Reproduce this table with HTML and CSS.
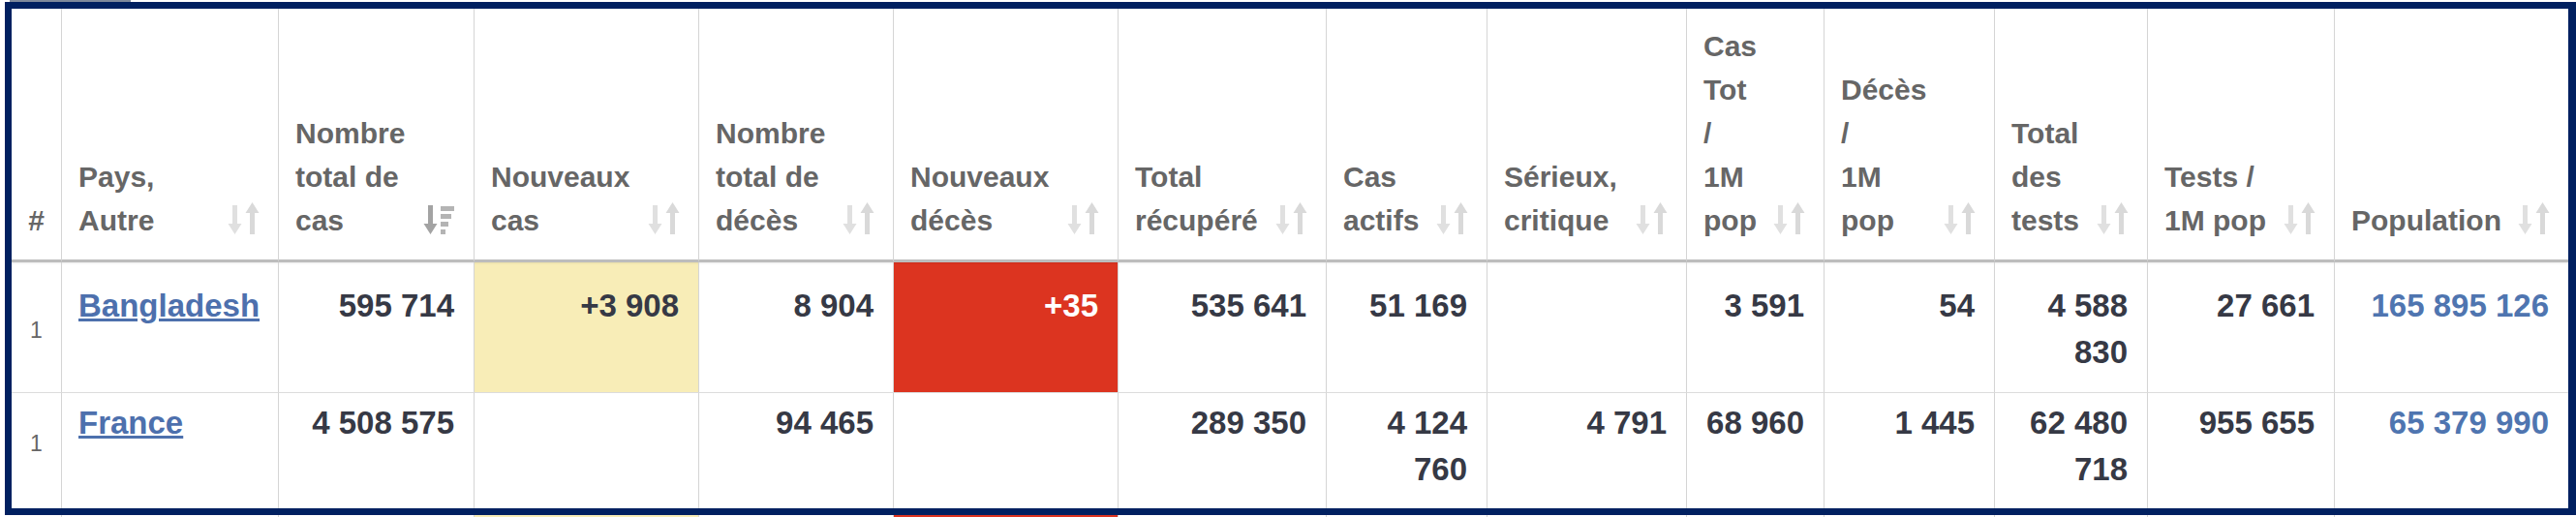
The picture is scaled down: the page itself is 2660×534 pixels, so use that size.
FILE: index.html
```html
<!DOCTYPE html>
<html lang="fr">
<head>
<meta charset="utf-8">
<title>Statistiques COVID-19</title>
<link rel="stylesheet" href="styles.css">
</head>
<body>
<svg class="svg-defs" aria-hidden="true">
  <symbol id="sort-both" viewBox="0 0 33 33">
    <path d="M5 3h5v19h4.5L7.5 33 0.5 22H5z" fill="#e0e0e0"/>
    <path d="M23 33h5V11h4.5L25.5 0 18.5 11H23z" fill="#d9d9d9"/>
  </symbol>
  <symbol id="sort-desc" viewBox="0 0 33 33">
    <path d="M5 3h5v19h4.5L7.5 33 0.5 22H5z" fill="#a3a3a3"/>
    <rect x="18" y="4" width="14" height="5" fill="#b4b4b4"/>
    <rect x="18" y="12" width="11" height="5" fill="#b4b4b4"/>
    <rect x="18" y="20" width="8" height="5" fill="#b4b4b4"/>
    <rect x="18" y="28" width="5" height="5" fill="#b4b4b4"/>
  </symbol>
</svg>
<div class="page">
  <div class="tab-edge"></div>
  <table class="stats">
    <colgroup>
      <col class="w-rank">
      <col class="w-country">
      <col class="w-total-cases">
      <col class="w-new-cases">
      <col class="w-total-deaths">
      <col class="w-new-deaths">
      <col class="w-recovered">
      <col class="w-active">
      <col class="w-serious">
      <col class="w-cases-pm">
      <col class="w-deaths-pm">
      <col class="w-tests">
      <col class="w-tests-pm">
      <col class="w-population">
    </colgroup>
    <thead>
      <tr>
        <th class="rank-h">#</th>
        <th><div class="th-in"><span>Pays,<br>Autre</span><svg class="sort"><use href="#sort-both"/></svg></div></th>
        <th><div class="th-in"><span>Nombre<br>total de<br>cas</span><svg class="sort"><use href="#sort-desc"/></svg></div></th>
        <th><div class="th-in"><span>Nouveaux<br>cas</span><svg class="sort"><use href="#sort-both"/></svg></div></th>
        <th><div class="th-in"><span>Nombre<br>total de<br>décès</span><svg class="sort"><use href="#sort-both"/></svg></div></th>
        <th><div class="th-in"><span>Nouveaux<br>décès</span><svg class="sort"><use href="#sort-both"/></svg></div></th>
        <th><div class="th-in"><span>Total<br>récupéré</span><svg class="sort"><use href="#sort-both"/></svg></div></th>
        <th><div class="th-in"><span>Cas<br>actifs</span><svg class="sort"><use href="#sort-both"/></svg></div></th>
        <th><div class="th-in"><span>Sérieux,<br>critique</span><svg class="sort"><use href="#sort-both"/></svg></div></th>
        <th><div class="th-in"><span>Cas<br>Tot<br>/<br>1M<br>pop</span><svg class="sort"><use href="#sort-both"/></svg></div></th>
        <th><div class="th-in"><span>Décès<br>/<br>1M<br>pop</span><svg class="sort"><use href="#sort-both"/></svg></div></th>
        <th><div class="th-in"><span>Total<br>des<br>tests</span><svg class="sort"><use href="#sort-both"/></svg></div></th>
        <th><div class="th-in"><span>Tests /<br>1M pop</span><svg class="sort"><use href="#sort-both"/></svg></div></th>
        <th><div class="th-in"><span>Population</span><svg class="sort"><use href="#sort-both"/></svg></div></th>
      </tr>
    </thead>
    <tbody>
      <tr class="r1">
        <td class="rank">1</td>
        <td class="country"><a href="#">Bangladesh</a></td>
        <td>595 714</td>
        <td class="new-cases">+3 908</td>
        <td>8 904</td>
        <td class="new-deaths">+35</td>
        <td>535 641</td>
        <td>51 169</td>
        <td></td>
        <td>3 591</td>
        <td>54</td>
        <td>4 588 830</td>
        <td>27 661</td>
        <td class="pop">165 895 126</td>
      </tr>
      <tr class="r2">
        <td class="rank">1</td>
        <td class="country"><a href="#">France</a></td>
        <td>4 508 575</td>
        <td></td>
        <td>94 465</td>
        <td></td>
        <td>289 350</td>
        <td>4 124 760</td>
        <td>4 791</td>
        <td>68 960</td>
        <td>1 445</td>
        <td>62 480 718</td>
        <td>955 655</td>
        <td class="pop">65 379 990</td>
      </tr>
      <tr class="r3">
        <td class="rank"></td>
        <td></td>
        <td></td>
        <td class="new-cases"></td>
        <td></td>
        <td class="new-deaths"></td>
        <td></td>
        <td></td>
        <td></td>
        <td></td>
        <td></td>
        <td></td>
        <td></td>
        <td></td>
      </tr>
    </tbody>
  </table>
  <div class="frame"></div>
</div>
</body>
</html>
```

FILE: styles.css
```css
html, body {
  margin: 0;
  padding: 0;
  background: #fff;
}

.svg-defs {
  position: absolute;
  width: 0;
  height: 0;
  overflow: hidden;
}

.page {
  position: relative;
  width: 2660px;
  height: 534px;
  overflow: hidden;
  font-family: "Liberation Sans", Arial, sans-serif;
}

.tab-edge {
  width: 125px;
  height: 2px;
  margin-left: 10px;
  background: #7e899b;
}

.stats {
  margin: 7px 0 0 12px;
  width: 2640px;
  table-layout: fixed;
  border-collapse: separate;
  border-spacing: 0;
  background: #fff;
}

.w-rank { width: 52px; }
.w-country { width: 224px; }
.w-total-cases { width: 202px; }
.w-new-cases { width: 232px; }
.w-total-deaths { width: 201px; }
.w-new-deaths { width: 232px; }
.w-recovered { width: 215px; }
.w-active { width: 166px; }
.w-serious { width: 206px; }
.w-cases-pm { width: 142px; }
.w-deaths-pm { width: 176px; }
.w-tests { width: 158px; }
.w-tests-pm { width: 193px; }
.w-population { width: 241px; }

.stats th {
  font-size: 30px;
  line-height: 45px;
  font-weight: bold;
  color: #666;
  text-align: left;
  vertical-align: bottom;
  padding: 16px 19px 18px 17px;
  border-right: 1px solid #d5d5d5;
  border-bottom: 3px solid #bdbdbd;
}

.stats th.rank-h {
  text-align: center;
  padding: 16px 0 18px;
}

.th-in {
  display: flex;
  align-items: flex-end;
  justify-content: space-between;
  gap: 8px;
}

.sort {
  flex: none;
  width: 33px;
  height: 33px;
  margin-bottom: 8px;
}

.stats td {
  font-size: 33px;
  line-height: 48px;
  font-weight: bold;
  color: #363945;
  text-align: right;
  vertical-align: top;
  padding: 21px 20px 17px 17px;
  border-right: 1px solid #d5d5d5;
  border-bottom: 1px solid #dcdcdc;
}

.stats tr > :last-child {
  border-right: none;
}

.r1 td {
  box-shadow: inset 0 2px 2px -1px rgba(0, 0, 0, 0.08);
}

.r2 td {
  padding-top: 7px;
  padding-bottom: 21px;
}

.r3 td {
  height: 60px;
}

.stats td.rank {
  font-size: 23px;
  line-height: 30px;
  font-weight: normal;
  color: #666;
  text-align: center;
  vertical-align: middle;
  padding: 6px 0 0;
}

.stats .r2 td.rank {
  padding: 0 0 20px;
}

.stats td.country {
  text-align: left;
}

.country a {
  color: #4d70ad;
  text-decoration: underline;
}

.stats td.pop {
  color: #4f75b0;
}

.stats td.new-cases {
  background: #f8edb7;
}

.stats td.new-deaths {
  background: #dc3420;
  color: #fff;
}

.frame {
  position: absolute;
  left: 5px;
  top: 2px;
  width: 2655px;
  height: 530px;
  box-sizing: border-box;
  border: 7px solid #002060;
  border-right-width: 8px;
  pointer-events: none;
}
```
